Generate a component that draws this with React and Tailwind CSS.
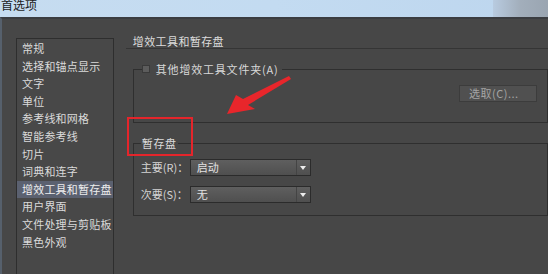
const items = [
  '常规',
  '选择和锚点显示',
  '文字',
  '单位',
  '参考线和网格',
  '智能参考线',
  '切片',
  '词典和连字',
  '增效工具和暂存盘',
  '用户界面',
  '文件处理与剪贴板',
  '黑色外观',
]

const font = { fontFamily: '"Noto Sans CJK SC", "Noto Sans", sans-serif' }

function Dropdown({ value }) {
  return (
    <div className="flex h-[17px] w-[121px] items-stretch border border-[#2b2b2b] bg-gradient-to-b from-[#5f5f5f] to-[#4f4f4f]">
      <span className="flex-1 pl-[6px] text-[11px] leading-[15px] text-[#e2e2e2]">{value}</span>
      <span className="flex w-[14px] items-center justify-center border-l border-[#444]">
        <span className="h-0 w-0 border-x-[3px] border-t-[4px] border-x-transparent border-t-[#eeeeee]" />
      </span>
    </div>
  )
}

export default function App() {
  return (
    <div className="relative h-[274px] w-[548px] overflow-hidden bg-[#474747]" style={font}>
      {/* title bar */}
      <div className="flex h-[17px] bg-gradient-to-r from-[#c6dcf0] via-[#c3dbf1] to-[#bdd6ee]">
        <span className="mt-[-2px] pl-[1px] text-[12px] leading-[14px] text-[#1c1c1c]">首选项</span>
        <div className="ml-auto h-full w-[55px] bg-gradient-to-r from-[#b8cbe0] via-[#a2aebb] to-[#9aa5b1]" />
      </div>

      <div className="flex h-[257px] border-t-[2px] border-l-[2px] border-t-[#3b3d41] border-l-[#56606c]">
        {/* category list */}
        <div className="ml-[14px] mt-[19px] h-[260px] w-[100px] border border-[#2e2e2e] bg-[#484848] pt-[1px]">
          {items.map((t) => (
            <div
              key={t}
              className={`h-[17.6px] pl-[5px] text-[11px] leading-[17.6px] tracking-[0.2px] ${
                t === '增效工具和暂存盘' ? 'bg-[#5b6170] text-[#eeeeee]' : 'text-[#dadada]'
              }`}
            >
              {t}
            </div>
          ))}
        </div>

        {/* right panel */}
        <div className="ml-[12px] w-[432px] pt-[15px]">
          <div className="h-[15px] border-b border-[#353535] pl-[7px] text-[11px] leading-[14px] tracking-[0.4px] text-[#dcdcdc]">
            增效工具和暂存盘
          </div>

          <fieldset className="ml-[7px] mt-[13px] h-[61px] border border-[#2f2f2f]">
            <legend className="ml-[8px] flex h-[14px] items-center pr-[3px]">
              <span className="h-[8px] w-[8px] border border-[#3a3a3a] bg-[#5c5c5c]" />
              <span className="ml-[6px] text-[11px] leading-[14px] tracking-[0.8px] text-[#d8d8d8]">
                其他增效工具文件夹(A)
              </span>
            </legend>
            <div className="flex justify-end pr-[10px] pt-[9px]">
              <button
                type="button"
                className="h-[17px] w-[78px] border border-[#3c3c3c] bg-[#505050] pl-[9px] text-left text-[11px] leading-[15px] tracking-[0.5px] text-[#a4a4a4]"
              >
                选取(C)...
              </button>
            </div>
          </fieldset>

          <fieldset className="ml-[7px] mt-[13px] h-[80px] border border-[#2f2f2f]">
            <legend className="ml-[7px] h-[14px] px-[1px] text-[11px] leading-[14px] tracking-[0.6px] text-[#dcdcdc]">
              暂存盘
            </legend>
            <div className="flex flex-col gap-[10px] pl-[7px] pt-[9px]">
              <div className="flex items-center">
                <span className="w-[49px] text-[11px] leading-[17px] text-[#d4d4d4]">主要(R)：</span>
                <Dropdown value="启动" />
              </div>
              <div className="flex items-center">
                <span className="w-[49px] text-[11px] leading-[17px] text-[#d4d4d4]">次要(S)：</span>
                <Dropdown value="无" />
              </div>
            </div>
          </fieldset>
        </div>
      </div>

      {/* annotation: red box and arrow */}
      <div className="absolute left-[127px] top-[117px] h-[39px] w-[66px] border-2 border-[#e4252b]" />
      <svg className="absolute left-0 top-0" width="548" height="274">
        <polygon
          points="227,114 236,95 243,99 289,76 291,79 248,105 255,109"
          fill="#e8262b"
        />
      </svg>
    </div>
  )
}
